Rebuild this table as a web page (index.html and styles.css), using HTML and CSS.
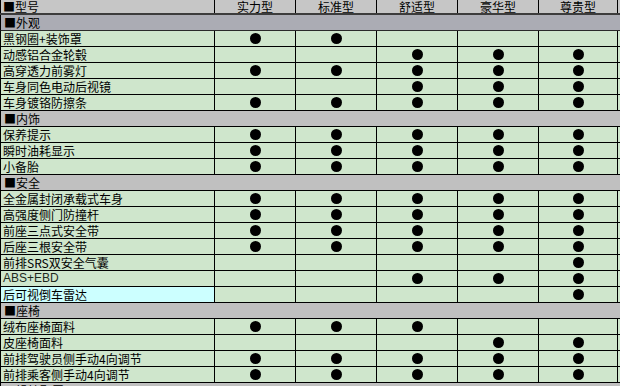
FILE: index.html
```html
<!DOCTYPE html>
<html>
<head>
<meta charset="utf-8">
<link rel="stylesheet" href="styles.css">
</head>
<body>
<div class="sheet">
  <div class="row head">
    <div class="c name">■型号</div><div class="c">实力型</div><div class="c">标准型</div><div class="c">舒适型</div><div class="c">豪华型</div><div class="c last">尊贵型</div>
  </div>
  <div class="row sec first">■外观</div>
  <div class="row"><div class="c name">黑钢圈+装饰罩</div><div class="c"><i></i></div><div class="c"><i></i></div><div class="c"></div><div class="c"></div><div class="c last"></div></div>
  <div class="row"><div class="c name">动感铝合金轮毂</div><div class="c"></div><div class="c"></div><div class="c"><i></i></div><div class="c"><i></i></div><div class="c last"><i></i></div></div>
  <div class="row"><div class="c name">高穿透力前雾灯</div><div class="c"><i></i></div><div class="c"><i></i></div><div class="c"><i></i></div><div class="c"><i></i></div><div class="c last"><i></i></div></div>
  <div class="row"><div class="c name">车身同色电动后视镜</div><div class="c"></div><div class="c"></div><div class="c"><i></i></div><div class="c"><i></i></div><div class="c last"><i></i></div></div>
  <div class="row"><div class="c name">车身镀铬防擦条</div><div class="c"><i></i></div><div class="c"><i></i></div><div class="c"><i></i></div><div class="c"><i></i></div><div class="c last"><i></i></div></div>
  <div class="row sec">■内饰</div>
  <div class="row"><div class="c name">保养提示</div><div class="c"><i></i></div><div class="c"><i></i></div><div class="c"><i></i></div><div class="c"><i></i></div><div class="c last"><i></i></div></div>
  <div class="row"><div class="c name">瞬时油耗显示</div><div class="c"><i></i></div><div class="c"><i></i></div><div class="c"><i></i></div><div class="c"><i></i></div><div class="c last"><i></i></div></div>
  <div class="row"><div class="c name">小备胎</div><div class="c"><i></i></div><div class="c"><i></i></div><div class="c"><i></i></div><div class="c"><i></i></div><div class="c last"><i></i></div></div>
  <div class="row sec">■安全</div>
  <div class="row"><div class="c name">全金属封闭承载式车身</div><div class="c"><i></i></div><div class="c"><i></i></div><div class="c"><i></i></div><div class="c"><i></i></div><div class="c last"><i></i></div></div>
  <div class="row"><div class="c name">高强度侧门防撞杆</div><div class="c"><i></i></div><div class="c"><i></i></div><div class="c"><i></i></div><div class="c"><i></i></div><div class="c last"><i></i></div></div>
  <div class="row"><div class="c name">前座三点式安全带</div><div class="c"><i></i></div><div class="c"><i></i></div><div class="c"><i></i></div><div class="c"><i></i></div><div class="c last"><i></i></div></div>
  <div class="row"><div class="c name">后座三根安全带</div><div class="c"><i></i></div><div class="c"><i></i></div><div class="c"><i></i></div><div class="c"><i></i></div><div class="c last"><i></i></div></div>
  <div class="row"><div class="c name">前排SRS双安全气囊</div><div class="c"></div><div class="c"></div><div class="c"></div><div class="c"></div><div class="c last"><i></i></div></div>
  <div class="row"><div class="c name latin">ABS+EBD</div><div class="c"></div><div class="c"></div><div class="c"><i></i></div><div class="c"><i></i></div><div class="c last"><i></i></div></div>
  <div class="row"><div class="c name cyan">后可视倒车雷达</div><div class="c"></div><div class="c"></div><div class="c"></div><div class="c"></div><div class="c last"><i></i></div></div>
  <div class="row sec">■座椅</div>
  <div class="row"><div class="c name">绒布座椅面料</div><div class="c"><i></i></div><div class="c"><i></i></div><div class="c"><i></i></div><div class="c"></div><div class="c last"></div></div>
  <div class="row"><div class="c name">皮座椅面料</div><div class="c"></div><div class="c"></div><div class="c"></div><div class="c"><i></i></div><div class="c last"><i></i></div></div>
  <div class="row"><div class="c name">前排驾驶员侧手动4向调节</div><div class="c"><i></i></div><div class="c"><i></i></div><div class="c"><i></i></div><div class="c"><i></i></div><div class="c last"><i></i></div></div>
  <div class="row"><div class="c name">前排乘客侧手动4向调节</div><div class="c"><i></i></div><div class="c"><i></i></div><div class="c"><i></i></div><div class="c"><i></i></div><div class="c last"><i></i></div></div>
  <div class="row sec">■操控配置</div>
</div>
</body>
</html>
```

FILE: styles.css
```css
html, body {
  margin: 0;
  padding: 0;
  background: #d4e8d0;
  overflow: hidden;
}
.sheet {
  width: 620px;
  font-family: "Noto Sans CJK SC", "Noto Sans", sans-serif;
  font-size: 12px;
  color: #000;
}
.row {
  display: grid;
  grid-template-columns: 215px 81px 81px 81px 81px 79px 2px;
  height: 15px;
  border-bottom: 1px solid #000;
  background: #cfe6cc;
  line-height: 15px;
}
.row.head {
  height: 13px;
  line-height: 13px;
  border-bottom: 2px solid #3c3c3c;
  background: #c6c6c6;
}
.c {
  border-right: 1px solid #000;
  display: flex;
  align-items: center;
  justify-content: center;
  overflow: hidden;
  white-space: nowrap;
}
.c.name {
  border-left: 1px solid #000;
  justify-content: flex-start;
  padding-left: 2px;
}
.head .c {
  font-size: 12px;
  line-height: 13px;
  overflow: visible;
}
.c.cyan {
  background: #ccffff;
}
.c.latin {
  font-family: "Liberation Sans", "Noto Sans CJK SC", sans-serif;
  font-size: 12px;
  color: #1e2a1e;
}
.row.sec {
  display: block;
  background: #c0c0c0;
  padding-left: 3px;
  border-left: 1px solid #000;
}
.row.sec.first {
  background: #abacb4;
  border-bottom: 1px solid #2a2a2a;
}
.c i {
  display: block;
  width: 11px;
  height: 11px;
  border-radius: 50%;
  background: #000;
}
```
